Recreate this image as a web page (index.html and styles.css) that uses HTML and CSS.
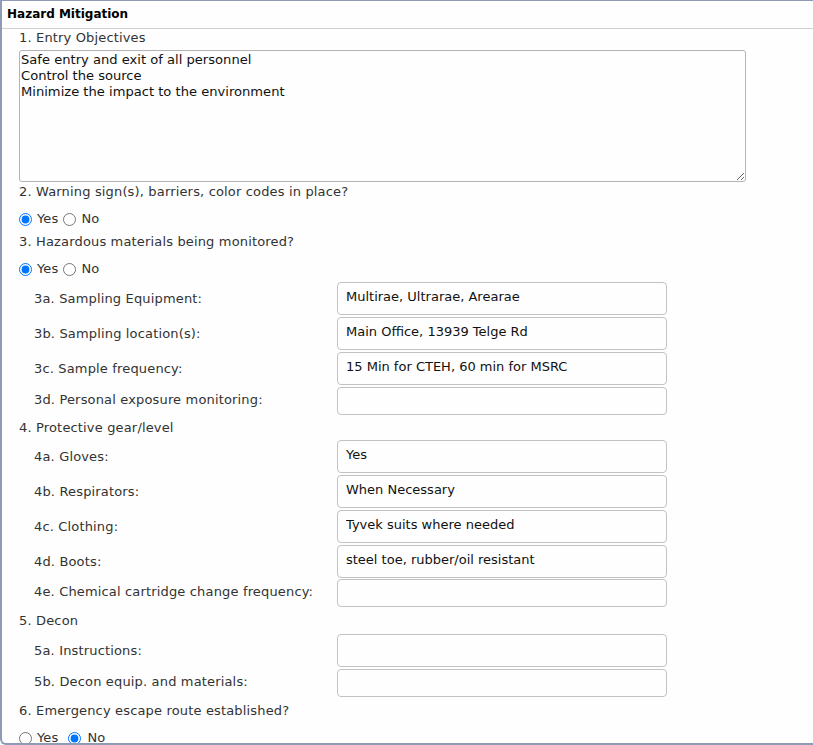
FILE: index.html
```html
<!DOCTYPE html>
<html>
<head>
<meta charset="utf-8">
<link rel="stylesheet" href="styles.css">
</head>
<body>
<div class="panel">
  <div class="title">Hazard Mitigation</div>
  <div class="content">
    <div class="q">1. Entry Objectives</div>
    <textarea class="objectives">Safe entry and exit of all personnel
Control the source
Minimize the impact to the environment</textarea>
    <div class="q q-after-area">2. Warning sign(s), barriers, color codes in place?</div>
    <div class="radios">
      <input type="radio" name="r2" checked><span class="opt">Yes</span><input type="radio" name="r2"><span class="opt">No</span>
    </div>
    <div class="q q-after-radio">3. Hazardous materials being monitored?</div>
    <div class="radios">
      <input type="radio" name="r3" checked><span class="opt">Yes</span><input type="radio" name="r3"><span class="opt">No</span>
    </div>
    <div class="group g-after-radio">
      <div class="row"><span class="lbl">3a. Sampling Equipment:</span><input class="field" value="Multirae, Ultrarae, Arearae"></div>
      <div class="row"><span class="lbl">3b. Sampling location(s):</span><input class="field" value="Main Office, 13939 Telge Rd"></div>
      <div class="row"><span class="lbl">3c. Sample frequency:</span><input class="field" value="15 Min for CTEH, 60 min for MSRC"></div>
      <div class="row row-last"><span class="lbl">3d. Personal exposure monitoring:</span><input class="field" value=""></div>
    </div>
    <div class="q q-after-group">4. Protective gear/level</div>
    <div class="group">
      <div class="row"><span class="lbl">4a. Gloves:</span><input class="field" value="Yes"></div>
      <div class="row"><span class="lbl">4b. Respirators:</span><input class="field" value="When Necessary"></div>
      <div class="row"><span class="lbl">4c. Clothing:</span><input class="field" value="Tyvek suits where needed"></div>
      <div class="row row-tight"><span class="lbl">4d. Boots:</span><input class="field" value="steel toe, rubber/oil resistant"></div>
      <div class="row row-last"><span class="lbl">4e. Chemical cartridge change frequency:</span><input class="field" value=""></div>
    </div>
    <div class="q q-after-group q-decon">5. Decon</div>
    <div class="group g-decon">
      <div class="row"><span class="lbl">5a. Instructions:</span><input class="field" value=""></div>
      <div class="row row-last"><span class="lbl">5b. Decon equip. and materials:</span><input class="field" value=""></div>
    </div>
    <div class="q q-after-group2">6. Emergency escape route established?</div>
    <div class="radios radios-wide">
      <input type="radio" name="r6"><span class="opt">Yes</span><input type="radio" name="r6" checked><span class="opt">No</span>
    </div>
  </div>
</div>
</body>
</html>
```

FILE: styles.css
```css
html, body {
  margin: 0;
  padding: 0;
  background: #fdfefd;
  overflow: hidden;
}

.panel {
  box-sizing: border-box;
  height: 745px;
  width: 830px;
  overflow: hidden;
  border-top: 1px solid #8e9bb6;
  border-left: 2px solid #8e9bb6;
  border-bottom: 2px solid #8e9bb6;
  border-bottom-left-radius: 6px;
  background: #fdfefd;
  font-family: "DejaVu Sans", Verdana, sans-serif;
  font-size: 13px;
  color: #333;
}

.title {
  height: 27px;
  line-height: 27px;
  padding-left: 5px;
  border-bottom: 1px solid #d0d0d0;
  font-size: 12px;
  font-weight: bold;
  color: #000;
}

.content {
  padding-left: 17px;
}

.q {
  line-height: 18px;
  height: 16px;
  white-space: nowrap;
  letter-spacing: 0.16px;
}

.objectives {
  display: block;
  box-sizing: border-box;
  margin: 5px 0 0 0;
  width: 727px;
  height: 132px;
  padding: 1px 1px;
  border: 1px solid #b4b4b4;
  border-radius: 3px;
  background: #fdfefd;
  font-family: "DejaVu Sans", Verdana, sans-serif;
  font-size: 13.1px;
  line-height: 16px;
  color: #111;
}

.q-after-area { margin-top: 1px; }
.q-after-radio { margin-top: 6px; }
.q-after-group { margin-top: 4px; }
.q-decon { margin-top: 5px; }
.q-after-group2 { margin-top: 5px; }

.radios {
  margin-top: 12px;
  height: 16px;
  line-height: 16px;
  display: flex;
  align-items: center;
  letter-spacing: 0.16px;
}

.radios input {
  margin: 0 5px 0 0;
  width: 13px;
  height: 13px;
}

.radios .opt {
  margin-right: 5px;
  color: #333;
}

.radios-wide .opt:first-of-type {
  margin-right: 10px;
}

.radios-wide input:last-of-type {
  margin-right: 6px;
}

.group {
  margin-top: 5px;
  padding-left: 15px;
}

.g-after-radio { margin-top: 5px; }
.g-decon { margin-top: 6px; }

.row {
  display: flex;
  align-items: center;
  height: 33px;
  margin-bottom: 2px;
}

.row-tight { margin-bottom: 1px; }

.row-last {
  height: 28px;
  margin-bottom: 0;
}

.row-last .lbl {
  margin-bottom: 3px;
}

.lbl {
  width: 303px;
  flex: none;
  white-space: nowrap;
  letter-spacing: 0.16px;
}

.field {
  box-sizing: border-box;
  width: 330px;
  height: 100%;
  margin: 0;
  padding: 3px 8px 8px 8px;
  border: 1px solid #c2c2c2;
  border-radius: 4px;
  background: #fdfefd;
  font-family: "DejaVu Sans", Verdana, sans-serif;
  font-size: 13px;
  color: #111;
  outline: none;
}
```
